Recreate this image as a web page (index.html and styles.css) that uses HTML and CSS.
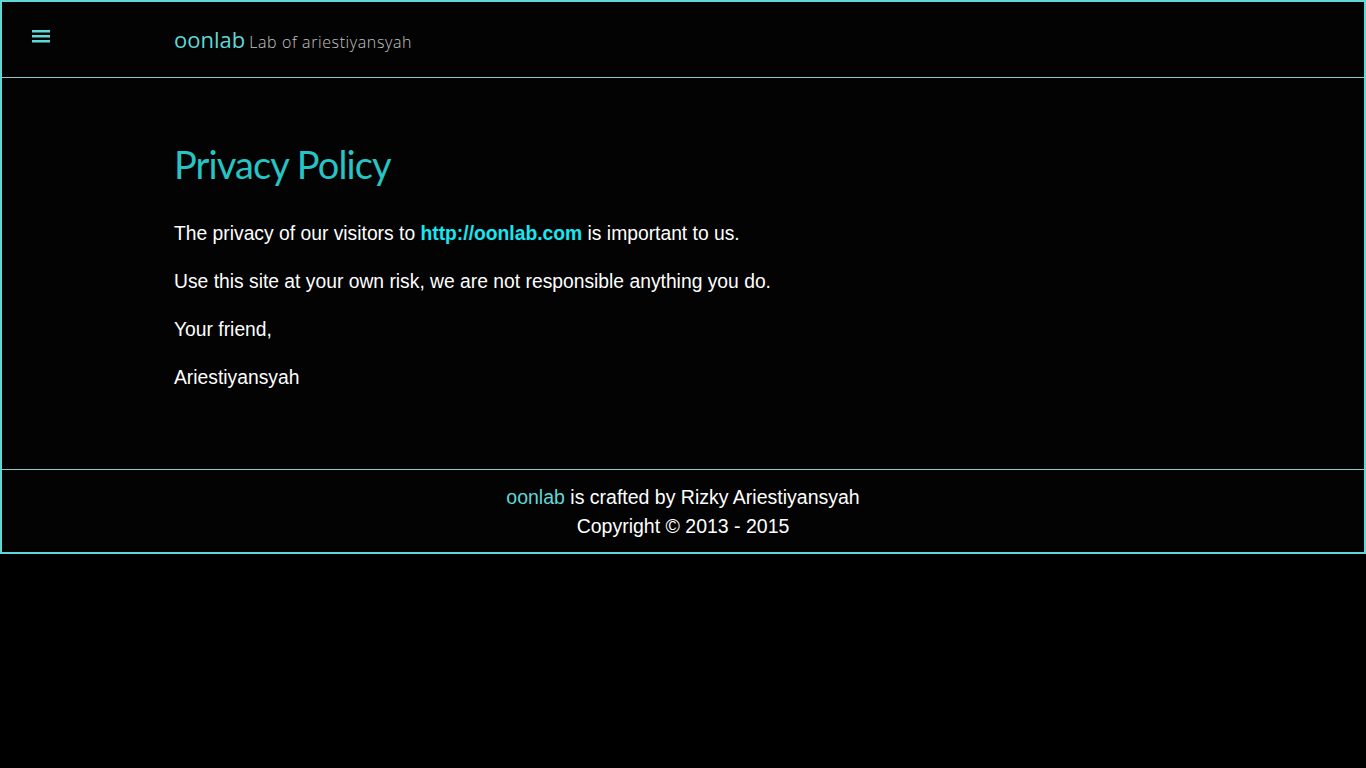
FILE: index.html
```html
<!DOCTYPE html>
<html lang="en">
<head>
    <meta charset="UTF-8">
    <meta name="viewport" content="width=device-width, initial-scale=1.0">
    <title>Privacy Policy - oonlab</title>
    <link rel="stylesheet" href="styles.css">
</head>
<body>
    <div class="page">
        <header class="topbar">
            <button class="menu-btn" aria-label="Menu">
                <svg width="24" height="24" viewBox="0 0 24 24">
                    <path d="M3 6h18v2.5H3zM3 11h18v2.5H3zM3 16h18v2.5H3z" fill="#5fd7d7"/>
                </svg>
            </button>
            <div class="brand">
                <a href="#" class="brand-name">oonlab</a>
                <span class="brand-tag">Lab of ariestiyansyah</span>
            </div>
        </header>

        <main class="content">
            <h1>Privacy Policy</h1>
            <p>The privacy of our visitors to <a href="#" class="site-link">http://oonlab.com</a> is important to us.</p>
            <p>Use this site at your own risk, we are not responsible anything you do.</p>
            <p>Your friend,</p>
            <p>Ariestiyansyah</p>
        </main>

        <footer class="footer">
            <div><a href="#" class="footer-link">oonlab</a> is crafted by Rizky Ariestiyansyah</div>
            <div>Copyright &copy; 2013 - 2015</div>
        </footer>
    </div>
</body>
</html>
```

FILE: styles.css
```css
body {
    margin: 0;
    background: #000;
    color: #fff;
    font-family: 'Liberation Sans', Arial, sans-serif;
}
a {
    text-decoration: none;
}
.page {
    border: 2px solid #5fd7d7;
    background: #030303;
}
.topbar {
    display: flex;
    height: 75px;
    border-bottom: 1px solid #8fc9c9;
}
.menu-btn {
    width: 172px;
    padding: 22px 0 0 27px;
    border: none;
    background: none;
    text-align: left;
    align-self: flex-start;
    cursor: pointer;
}
.menu-btn svg {
    display: block;
}
.brand {
    display: flex;
    align-items: baseline;
    gap: 4px;
    padding-top: 22px;
    font-family: 'Open Sans', sans-serif;
}
.brand-name {
    color: #5fd7d7;
    font-size: 22px;
}
.brand-tag {
    color: #c4c4c4;
    font-size: 16px;
    font-weight: 300;
    letter-spacing: 0.6px;
}
.content {
    padding: 62px 0 57px 172px;
}
.content h1 {
    margin: 0 0 32px;
    font-family: 'Lato', sans-serif;
    font-weight: 400;
    font-size: 38px;
    line-height: 48px;
    letter-spacing: -0.9px;
    color: #26c4c4;
}
.content p {
    margin: 0 0 20px;
    font-size: 19.3px;
    line-height: 28px;
}
.site-link {
    color: #19e6f0;
    font-weight: bold;
}
.footer {
    border-top: 1px solid #8fc9c9;
    padding: 13px 0 11px;
    text-align: center;
    font-size: 19.5px;
    line-height: 29px;
}
.footer-link {
    color: #5fd7d7;
}
```
